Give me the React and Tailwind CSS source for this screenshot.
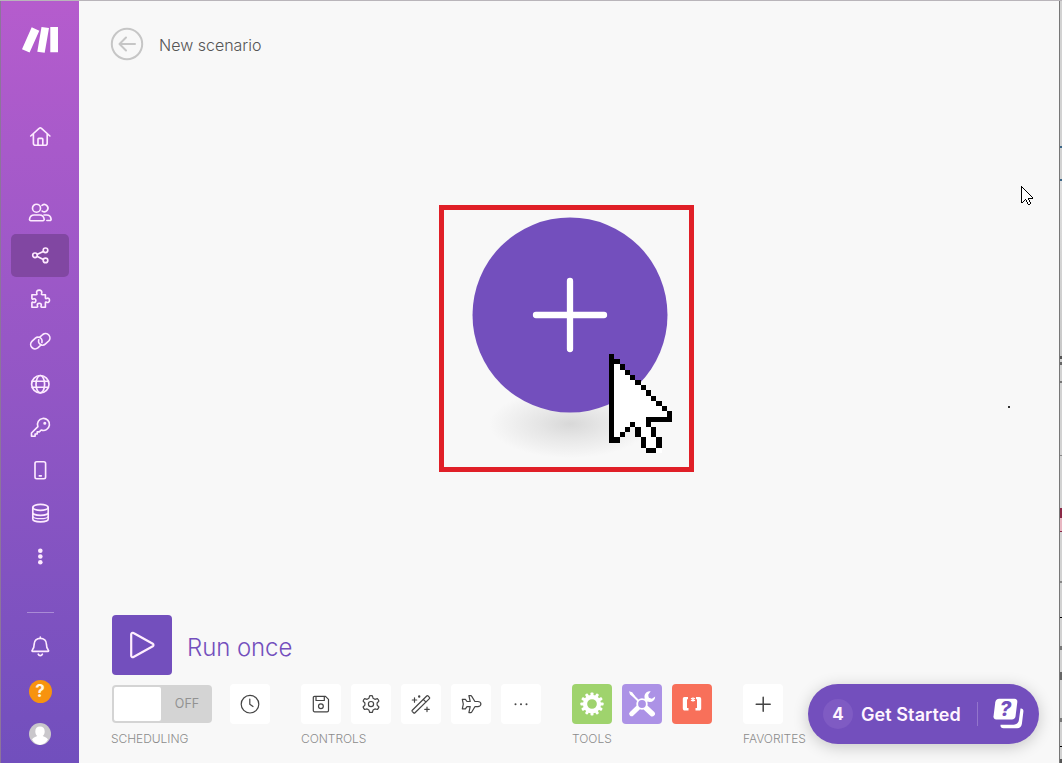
import React from "react";

const line = {
  fill: "none",
  stroke: "currentColor",
  strokeLinecap: "round",
  strokeLinejoin: "round",
};

function Icon({ children, width = 1.65, className = "size-6" }) {
  return (
    <svg viewBox="0 0 24 24" className={className + " shrink-0"} {...line} strokeWidth={width}>
      {children}
    </svg>
  );
}

const navItems = [
  {
    id: "team",
    art: (
      <>
        <circle cx="8.5" cy="8.2" r="4" />
        <path d="M2.7 20.700h12.300a1.200 1.200 0 0 0 1.200-1.300c-.3-2.800-2.200-4.400-4.700-4.400H6.200c-2.500 0-4.400 1.600-4.700 4.400a1.200 1.200 0 0 0 1.200 1.300Z" />
        <path d="M14 5.400a3.600 3.600 0 1 1 .2 5.700M16 15h2.600c2.300 0 4.200 1.500 4.500 4.200a1.200 1.200 0 0 1-1.200 1.300h-3" />
      </>
    ),
  },
  {
    id: "scenarios",
    active: true,
    art: (
      <>
        <circle cx="7" cy="12.300" r="2.300" />
        <circle cx="17.500" cy="7.300" r="2.300" />
        <circle cx="17.500" cy="17.400" r="2.300" />
        <path d="M9.400 11.200l5.900-2.800M9.400 13.400l5.900 3.100" />
      </>
    ),
  },
  {
    id: "templates",
    art: (
      <path d="M3.900 8.700h4.200c.8 0 1.100-.6.7-1.300C8 5.700 9.300 4.100 11.200 4.100s3.200 1.600 2.400 3.300c-.4.700-.1 1.300.7 1.300h3.100v3c0 .8.600 1.100 1.300.7 1.500-.8 2.800.3 2.800 1.900s-1.300 2.700-2.800 1.900c-.7-.4-1.300-.1-1.300.7v4.300h-3.600c-.8 0-1-.5-.7-1.200.7-1.600-.2-2.800-1.800-2.800s-2.500 1.200-1.800 2.800c.3.700.1 1.200-.7 1.200H3.900v-4.300c0-.8.6-1 1.200-.7 1.500.7 2.800-.1 2.800-1.600s-1.300-2.300-2.800-1.600c-.6.3-1.200.1-1.200-.7Z" />
    ),
  },
  {
    id: "connections",
    art: (
      <>
        <path d="M13.900 13.500c.6-2.400-.7-4.600-3-5.200-1.300-.3-2.500 0-3.500.9l-3.500 3.200a4.400 4.400 0 0 0 5.900 6.500l3.200-2.900" />
        <path d="M10.700 10.900c-.6 2.400.7 4.600 3 5.200 1.300.3 2.500 0 3.500-.9l3.500-3.200a4.400 4.400 0 0 0-5.900-6.500l-3 2.700" />
      </>
    ),
  },
  {
    id: "webhooks",
    art: (
      <>
        <circle cx="12.300" cy="12.200" r="8.700" />
        <ellipse cx="12.300" cy="12.200" rx="4.300" ry="8.700" />
        <path d="M4.200 9.200h16.200M4.200 15.200h16.200" />
      </>
    ),
  },
  {
    id: "keys",
    art: (
      <>
        <path d="M9.900 11.700a6 6 0 1 1 3.300 3.300l-1.900 1.900H9.200v2.100H7.100v2.200H3.500v-3.200Z" />
        <circle cx="16.800" cy="8.300" r=".7" fill="currentColor" />
      </>
    ),
  },
  {
    id: "devices",
    art: (
      <>
        <rect x="7" y="3.700" width="10.600" height="17" rx="1.700" />
        <path d="M11.300 17.900h2" />
      </>
    ),
  },
  {
    id: "data-stores",
    art: (
      <>
        <ellipse cx="12.500" cy="6.400" rx="7.700" ry="3" />
        <path d="M4.800 6.400v11.500c0 1.700 3.400 3 7.700 3s7.700-1.300 7.700-3V6.400M4.800 11.500c0 1.600 3.400 2.900 7.700 2.900s7.700-1.300 7.700-2.900" />
        <path d="M5 15.700c.6 1 3.700 2 7.500 2s6.900-1 7.500-2" strokeWidth="1.200" />
      </>
    ),
  },
  {
    id: "more",
    art: (
      <g fill="currentColor" stroke="none">
        <circle cx="12.300" cy="6.800" r="2.300" />
        <circle cx="12.300" cy="12.500" r="2.300" />
        <circle cx="12.300" cy="18.200" r="2.300" />
      </g>
    ),
  },
];

function Sidebar() {
  return (
    <nav className="flex w-[79px] shrink-0 flex-col items-center border-l border-[#8d749b] bg-linear-to-b from-[#b55ccd] to-[#714fbd] text-[#fdeaff]">
      <svg viewBox="0 0 38 28" className="mt-[25px] h-7 w-[38px] shrink-0 fill-white">
        <path d="M10.700 1.300 18.300 4.800 8.600 26.500 1 23.300ZM20.500 1 28 2 23.700 26.700 16.300 25.700ZM29.300 1H37V26.300H29.300Z" />
      </svg>
      <div className="mt-[71px] flex h-6">
        <Icon>
          <path d="m2.700 11 8.700-7.800a1.300 1.300 0 0 1 1.800 0l8.700 7.800M5.400 9v9.200a2 2 0 0 0 2 2h9.800a2 2 0 0 0 2-2V9M10 20v-5.800a.8.800 0 0 1 .8-.8h3.200a.8.800 0 0 1 .8.800V20" />
        </Icon>
      </div>
      <ul className="mt-[42px] flex flex-col">
        {navItems.map((item) => (
          <li
            key={item.id}
            className={
              item.active
                ? "flex h-[43px] w-[58px] items-center justify-center rounded-[5px] bg-[#8147a2] pb-[2px] text-[#ffeaff]"
                : "flex h-[43px] w-[58px] items-center justify-center pb-[2px]"
            }
          >
            <Icon>{item.art}</Icon>
          </li>
        ))}
      </ul>
      <div className="mt-[34px] h-px w-[27px] bg-[#a98bd6]" />
      <div className="mt-[21px] flex h-6">
        <Icon>
          <path d="M4.600 17.300c-.6 0-.8-.6-.4-1 1.600-1.700 2-2.900 2-6.200 0-3.400 2.500-5.700 6.100-5.700s6.100 2.300 6.100 5.700c0 3.300.4 4.500 2 6.200.4.400.2 1-.4 1ZM12.300 4.200V3M10.200 20.200a2.300 2.300 0 0 0 4.200 0" />
        </Icon>
      </div>
      <div className="mt-[22px] flex size-[23px] items-center justify-center rounded-full bg-[#f7930f] font-['Inter',sans-serif] text-[17px] font-bold leading-none text-[#fff4e0]">
        ?
      </div>
      <svg viewBox="0 0 22 22" className="mt-[20px] size-[22px] shrink-0">
        <circle cx="11" cy="11" r="11" fill="#c9c7cb" />
        <path
          d="M11 3.600c3 0 4.700 2 4.700 4.800 0 2-.8 3.700-2 4.600 2.200.8 4.700 1.800 5.300 3.600A11 11 0 0 1 11 22 11 11 0 0 1 3 16.600c.6-1.800 3.100-2.800 5.300-3.600-1.200-.9-2-2.600-2-4.600 0-2.800 1.700-4.800 4.700-4.800Z"
          fill="#fff"
        />
      </svg>
    </nav>
  );
}

function PixelCursor({ className }) {
  return (
    <svg viewBox="0 0 12 19" preserveAspectRatio="none" shapeRendering="crispEdges" className={className}>
      <path
        d="M0 1h2v1h1v1h1v1h1v1h1v1h1v1h1v1h1v1h1v1h1v1h1v2h-4v2h1v2h1v2h-2v-1h-1v-2h-1v-2h-1v-1h-1v1h-1v1h-1v1h-1v1h-1Z"
        fill="#fff"
      />
      <path
        d="M0 0h1v1h1v1h-1v14h1v1h-2ZM2 2h1v1h-1ZM3 3h1v1h-1ZM4 4h1v1h-1ZM5 5h1v1h-1ZM6 6h1v1h-1ZM7 7h1v1h-1ZM8 8h1v1h-1ZM9 9h1v1h-1ZM10 10h1v1h-1ZM11 11h1v2h-5v-1h4ZM7 13h1v1h-1ZM8 14h1v2h-1ZM9 16h1v2h-1ZM7 18h2v1h-2ZM6 16h1v2h-1ZM5 14h1v2h-1ZM4 13h1v1h-1ZM3 14h1v1h-1ZM2 15h1v1h-1Z"
        fill="#000"
      />
    </svg>
  );
}

function Canvas() {
  return (
    <section className="relative h-[527px] shrink-0">
      <div className="absolute left-[360px] top-[117px] h-[267px] w-[255px] border-5 border-[#e01f27]">
        <div className="absolute left-[45px] top-[180px] h-[68px] w-[162px] bg-[radial-gradient(closest-side,#d8d8d8,#e6e6e6_40%,#f8f8f8)]" />
        <div className="absolute left-[28px] top-[7px] flex size-[196px] items-center justify-center">
          <svg viewBox="0 0 196 196" className="size-[196px]">
            <circle cx="98" cy="98" r="97.500" fill="#734fbd" />
            <path d="M98 64v68M64 98h68" stroke="#fff" strokeWidth="6.300" strokeLinecap="round" />
          </svg>
        </div>
        <PixelCursor className="absolute left-[165px] top-[144px] h-[99px] w-[63px]" />
      </div>
      <PixelCursor className="absolute left-[942px] top-[98px] h-[19px] w-[12px]" />
      <div className="absolute left-[929px] top-[318px] size-[2px] bg-[#333]" />
    </section>
  );
}

const controls = [
  {
    id: "save",
    art: (
      <>
        <path d="M4.300 5.600a1.300 1.300 0 0 1 1.300-1.300h10.900l3 3v11.200a1.300 1.300 0 0 1-1.300 1.300H5.600a1.300 1.300 0 0 1-1.300-1.300ZM7 4.300v4.200h8.300V4.300" />
        <circle cx="11.900" cy="14.200" r="2.400" />
      </>
    ),
  },
  {
    id: "settings",
    art: (
      <>
        <path d="M10.600 3.900c.9-.3 1.900-.3 2.800 0l.7 2.400 1.800 1 2.500-.6c.7.700 1.200 1.500 1.500 2.500L18.100 11v2.100l1.800 1.900c-.3.900-.8 1.800-1.500 2.500l-2.500-.6-1.800 1-.7 2.400c-.9.200-1.900.2-2.800 0l-.7-2.400-1.800-1-2.500.6c-.7-.7-1.200-1.600-1.500-2.500L5.900 13.100V11L4.100 9.200c.3-1 .8-1.800 1.500-2.500l2.500.6 1.800-1Z" />
        <circle cx="12" cy="12.100" r="2.600" />
      </>
    ),
  },
  {
    id: "align",
    art: (
      <>
        <path d="m3.300 18.200 14.400-14.200a1 1 0 0 1 1.400 0l1.300 1.300a1 1 0 0 1 0 1.400L6 20.800a1 1 0 0 1-1.400 0l-1.300-1.200a1 1 0 0 1 0-1.400ZM14.300 7.400l2.700 2.700M5.500 5.800v4.400M3.300 8h4.400M18 15.200v4.400M15.800 17.400h4.400" />
        <circle cx="10.200" cy="4.500" r=".6" fill="currentColor" />
      </>
    ),
  },
  {
    id: "flow",
    art: (
      <path d="M15.900 9.500h3c1.500 0 3 1.300 3 2.600s-1.500 2.600-3 2.600h-3l-3.300 5.500a.8.800 0 0 1-.7.400h-2l1.300-5.900H8l-1.600 2.100H3.300l1-4.700-1-4.700h3.100L8 9.500h3.200L9.900 3.700h2a.8.800 0 0 1 .7.400Z" />
    ),
  },
  {
    id: "more",
    art: (
      <g fill="currentColor" stroke="none">
        <circle cx="6.500" cy="12.200" r="1" />
        <circle cx="12" cy="12.200" r="1" />
        <circle cx="17.500" cy="12.200" r="1" />
      </g>
    ),
  },
];

function WhiteButton({ children }) {
  return (
    <button className="flex size-10 shrink-0 items-center justify-center rounded-[4px] bg-white text-[#444]">
      <Icon width={1.2}>{children}</Icon>
    </button>
  );
}

function Group({ label, className, children }) {
  return (
    <div className={"flex w-0 flex-col whitespace-nowrap " + className}>
      <div className="flex h-10 items-center gap-2.5">{children}</div>
      <div className="mt-[7px] text-[12px] leading-4 font-light tracking-[-0.030px] text-[#8c8c8c]">{label}</div>
    </div>
  );
}

const gearTeeth = [0, 30, 60, 90, 120, 150, 180, 210, 240, 270, 300, 330];

function Toolbar() {
  return (
    <footer className="flex flex-col pl-[32px]">
      <div className="flex items-center pl-px">
        <button className="flex size-[60px] items-center justify-center rounded-[4px] bg-[#734fbd] pr-px text-[#ffeefe]">
          <svg viewBox="0 0 28 30" className="h-[30px] w-7" {...line} strokeWidth="2.200">
            <path d="M3.200 4.200v21.600a1.500 1.500 0 0 0 2.300 1.200L24.800 16.200a1.400 1.400 0 0 0 0-2.400L5.500 3a1.500 1.500 0 0 0-2.300 1.200Z" />
          </svg>
        </button>
        <span className="ml-[15px] mt-[6px] text-[24px] leading-8 font-light tracking-[-0.080px] text-[#734fbd]">Run once</span>
      </div>
      <div className="mt-[9px] flex items-start">
        <Group label="SCHEDULING" className="basis-[190px]">
          <div className="mr-2 ml-px flex h-[38px] w-[100px] shrink-0 items-center rounded-[4px] bg-[#d4d4d4] p-0.5">
            <div className="h-[34px] w-[47px] rounded-[2px] bg-white" />
            <span className="flex-1 pl-[3px] text-center text-[12.500px] font-normal text-[#929292]">OFF</span>
          </div>
          <WhiteButton>
            <circle cx="12" cy="12.200" r="8.800" />
            <path d="M11.800 7v5.200l3.200 2.300" />
          </WhiteButton>
        </Group>
        <Group label="CONTROLS" className="basis-[271px]">
          {controls.map((c) => (
            <WhiteButton key={c.id}>{c.art}</WhiteButton>
          ))}
        </Group>
        <Group label="TOOLS" className="basis-[171px]">
          <div className="flex size-10 shrink-0 items-center justify-center rounded-[4px] bg-[#9fd36d]">
            <svg viewBox="-12 -12 24 24" className="size-6">
              <circle r="7" fill="none" stroke="#fff" strokeWidth="4.300" />
              {gearTeeth.map((a) => (
                <rect key={a} x="-1.500" y="-11.600" width="3" height="4" rx=".8" fill="#fff" transform={`rotate(${a})`} />
              ))}
            </svg>
          </div>
          <div className="flex size-10 shrink-0 items-center justify-center rounded-[4px] bg-[#ac92e6]">
            <svg viewBox="0 0 28 28" className="size-7" fill="none" stroke="#fff" strokeLinecap="round">
              <path d="m4.500 5 7 7" strokeWidth="2" />
              <path d="m1 1.200 3.200 1 3 4.300-1 1-4.200-3Z" fill="#fff" stroke="none" />
              <path d="m18 18 6.200 5.700" strokeWidth="5.500" />
              <path d="m10.200 17.500-6.500 6.200" strokeWidth="5" />
              <path d="m17 11 3.500-3.500" strokeWidth="4" strokeLinecap="butt" />
              <path d="M22.700 1.300a5.400 5.400 0 1 0 4.500 5.200l-3.300 2.300-3.200-1-.5-3.100Z" fill="#fff" stroke="none" />
              <circle cx="14" cy="14" r="4.800" fill="#ac92e6" strokeWidth="1.800" />
            </svg>
          </div>
          <div className="flex size-10 shrink-0 items-center justify-center rounded-[4px] bg-[#f8705a]">
            <svg viewBox="0 0 20 16" className="h-4 w-5" fill="#fff">
              <path d="M6 1H2.500C1.300 1 .8 1.800 .8 3v9.200c0 1.500.8 2.300 2.100 2.300H6.500v-2.400H5V3.200h1ZM14 1h3.300c1.200 0 1.900.8 1.900 2v9.200c0 1.500-.8 2.300-2.100 2.300H13.500v-2.400H15V3.200h-1Z" />
              <path d="M11 1.200v4.600M9 2.300l4 2.400M13 2.300 9 4.700" stroke="#fff" strokeWidth="1.100" />
            </svg>
          </div>
        </Group>
        <Group label="FAVORITES" className="basis-[70px]">
          <WhiteButton>
            <path d="M12.200 5.200v14M5.200 12.200h14" strokeWidth="1.500" />
          </WhiteButton>
        </Group>
      </div>
    </footer>
  );
}

function GetStarted() {
  return (
    <button className="absolute left-[808px] top-[683px] flex h-[60px] w-[231px] items-center rounded-full bg-[#734fbd] pl-[15px] text-[#fff5ff] shadow-[0_3px_16px_rgba(0,0,0,0.2)]">
      <span className="flex size-[30px] items-center justify-center rounded-full bg-[#7f5bc3] pt-px text-[17px] font-bold">4</span>
      <span className="ml-2 w-[100px] whitespace-nowrap pt-px text-left text-[18px] font-semibold tracking-[0.080px]">Get Started</span>
      <span className="ml-[16px] h-6 w-px bg-[#9375cc]" />
      <svg viewBox="0 0 32 32" className="ml-[15px] size-8">
        <path d="M27.500 10.500h.5c1.700.2 2.600 1.400 2.400 3l-1.500 12.200c-.3 2.700-2 4.500-4.800 4.500H10.500c-2 0-3-1-3-2.500v-1h13c3 0 5-1.700 5.400-4.600Z" fill="#fff" />
        <path d="M6.200.800h15.300c2 0 3 1.300 2.800 3.200l-1.700 14c-.3 2.200-1.600 3.500-3.800 3.500H3.300c-2 0-3-1.200-2.800-3.200l1.800-14C2.600 2 4 .8 6.200.8Z" fill="#fff" />
        <text x="12.500" y="18.200" textAnchor="middle" fontFamily="Inter, sans-serif" fontSize="20" fontWeight="800" fontStyle="italic" fill="#734fbd">?</text>
      </svg>
    </button>
  );
}

function WindowEdge() {
  return (
    <aside className="flex w-[3px] shrink-0 flex-col border-l border-[#777] bg-[#d2d2d2]">
      <div className="h-[145px]" />
      <div className="h-0.5 bg-[#3b6687]" />
      <div className="h-[31px]" />
      <div className="h-0.5 bg-[#3b6687]" />
      <div className="h-[175px] bg-linear-to-b from-[#dedede] to-[#c8c8c8]" />
      <div className="h-[3px] bg-[#555]" />
      <div className="h-[3px]" />
      <div className="h-[3px] bg-[#666]" />
      <div className="h-[16px]" />
      <div className="h-[2px] bg-[#777]" />
      <div className="h-[72px]" />
      <div className="h-px bg-[#888]" />
      <div className="h-[52px]" />
      <div className="h-[10px] bg-[#8b2947]" />
      <div className="h-[13px] bg-[#e8b7c2]" />
      <div className="h-px bg-[#8b2947]" />
      <div className="h-[49px]" />
      <div className="h-0.5 bg-[#888]" />
      <div className="h-[34px]" />
      <div className="h-px bg-black" />
      <div className="h-[28px]" />
      <div className="h-[4px] bg-[#777]" />
      <div className="h-[22px]" />
      <div className="h-[8px] bg-[#666]" />
      <div className="h-[38px]" />
      <div className="h-[4px] bg-[#777]" />
      <div className="h-[24px]" />
      <div className="h-px bg-black" />
      <div className="h-[12px]" />
      <div className="h-[4px] bg-[#555]" />
    </aside>
  );
}

export default function App() {
  return (
    <div className="relative flex h-[763px] w-[1062px] overflow-hidden border-t border-[#b9b5ba] bg-[#f8f8f8] font-['Inter',sans-serif]">
      <Sidebar />
      <main className="flex min-w-0 flex-1 flex-col">
        <header className="flex h-[87px] shrink-0 items-center pb-[2px] pl-[31px]">
          <svg viewBox="0 0 34 34" className="size-[34px]" {...line} stroke="#c6c6c6" strokeWidth="2">
            <circle cx="17" cy="17" r="15.200" />
            <path d="M25 17H10M16 10.500 9.500 17l6.500 6.500" />
          </svg>
          <h1 className="ml-[15px] mt-[2px] text-[16px] leading-6 font-light text-[#555]">New scenario</h1>
        </header>
        <Canvas />
        <Toolbar />
      </main>
      <WindowEdge />
      <GetStarted />
    </div>
  );
}
